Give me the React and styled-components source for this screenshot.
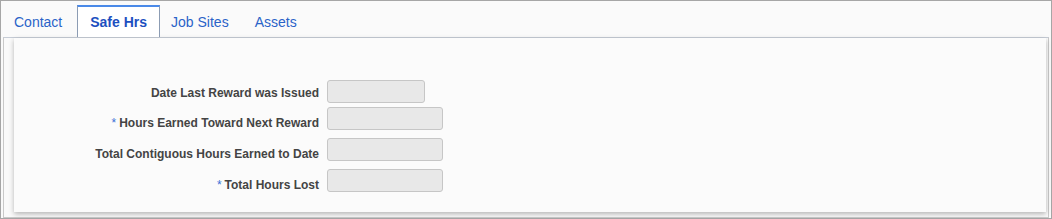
import styled, { createGlobalStyle } from 'styled-components';

const GlobalStyle = createGlobalStyle`
    html, body {
        margin: 0;
        padding: 0;
        background: #ffffff;
    }
    * {
        box-sizing: border-box;
    }
`;

const Frame = styled.div`
    width: 1052px;
    height: 219px;
    border: 1px solid #a6a6a6;
    background: #fafafa;
    display: flex;
    flex-direction: column;
    font-family: "Liberation Sans", Arial, sans-serif;
`;

const TabBar = styled.div`
    height: 36px;
    padding-top: 4px;
    display: flex;
`;

const Tab = styled.div`
    height: 32px;
    padding: 1px 13px 0;
    display: flex;
    align-items: center;
    font-size: 14px;
    color: #2a63c8;
    cursor: pointer;

    ${p => p.$active && `
        margin: 0 -2px 0 2px;
        padding: 0 12px;
        color: #1c4fc0;
        font-weight: bold;
        background: #ffffff;
        border-top: 2px solid #4a89e8;
        border-left: 1px solid #8c9cb3;
        border-right: 1px solid #8c9cb3;
        position: relative;
    `}
`;

const ContentBox = styled.div`
    flex: 1;
    margin: 0 2px;
    border: 1px solid #c9c9c9;
    border-top-color: #c6ccd6;
    padding: 0 2px 5px 10px;
    display: flex;
`;

const Panel = styled.div`
    flex: 1;
    background: #fbfbfb;
    box-shadow: 0 2px 5px rgba(0, 0, 0, 0.28);
    padding-top: 42px;
    display: flex;
    flex-direction: column;
`;

const FieldRow = styled.div`
    display: flex;
    align-items: flex-start;
    gap: 8px;
    margin-top: ${p => p.$space}px;
`;

const Label = styled.label`
    width: 305px;
    padding-top: ${p => p.$offset}px;
    text-align: right;
    font-size: 12px;
    line-height: 14px;
    font-weight: bold;
    color: #444444;
`;

const Required = styled.span`
    color: #3a6fd6;
    margin-right: 3px;
    font-weight: normal;
`;

const Input = styled.input`
    width: ${p => p.$width}px;
    height: 23px;
    background: #e8e8e8;
    border: 1px solid #c6c6c6;
    border-radius: 3px;
    padding: 0 4px;
    font-family: inherit;
    font-size: 12px;
    outline: none;
`;

const fields = [
    { label: 'Date Last Reward was Issued', required: false, width: 98, space: 0, offset: 6 },
    { label: 'Hours Earned Toward Next Reward', required: true, width: 116, space: 4, offset: 9 },
    { label: 'Total Contiguous Hours Earned to Date', required: false, width: 116, space: 8, offset: 9 },
    { label: 'Total Hours Lost', required: true, width: 116, space: 8, offset: 9 },
];

const tabs = ['Contact', 'Safe Hrs', 'Job Sites', 'Assets'];

const App = () => {
    return (
        <>
            <GlobalStyle />
            <Frame>
                <TabBar>
                    {tabs.map(t => (
                        <Tab key={t} $active={t === 'Safe Hrs'}>{t}</Tab>
                    ))}
                </TabBar>
                <ContentBox>
                    <Panel>
                        {fields.map(f => (
                            <FieldRow key={f.label} $space={f.space}>
                                <Label $offset={f.offset}>
                                    {f.required && <Required>*</Required>}
                                    {f.label}
                                </Label>
                                <Input $width={f.width} readOnly />
                            </FieldRow>
                        ))}
                    </Panel>
                </ContentBox>
            </Frame>
        </>
    );
};

export default App;
